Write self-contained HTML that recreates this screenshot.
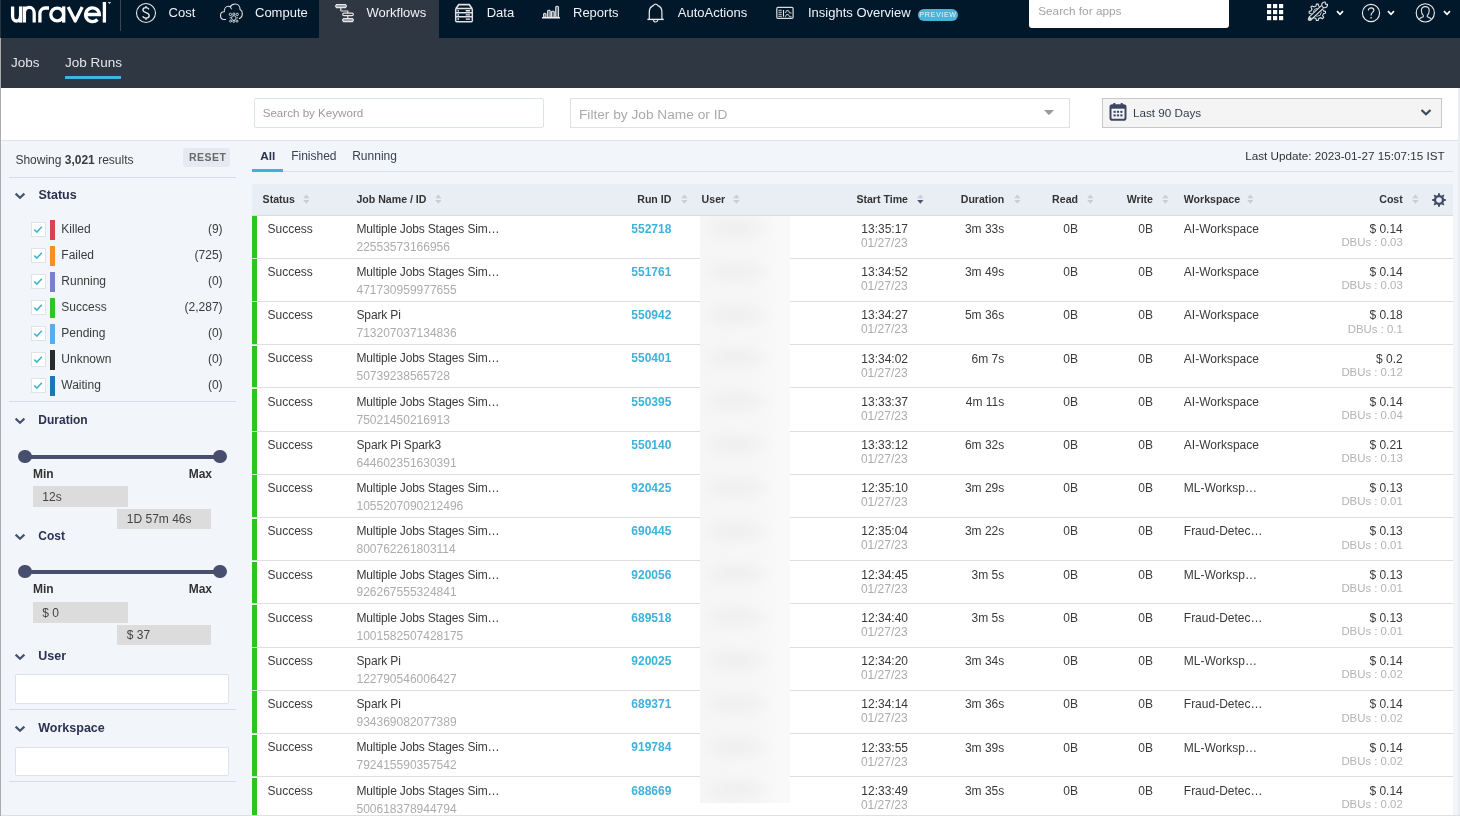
<!DOCTYPE html>
<html><head><meta charset="utf-8"><title>Job Runs</title>
<style>
html,body{margin:0;padding:0;width:1460px;height:816px;overflow:hidden;background:#f2f5f9;font-family:"Liberation Sans", sans-serif;}
.t{position:absolute;white-space:nowrap;font-family:"Liberation Sans", sans-serif;}
.r{position:absolute;display:block;}
b{font-weight:700}
</style></head><body>
<div id="root" style="position:absolute;left:0;top:0;width:1460px;height:816px;will-change:transform">
<div class="r" style="left:0px;top:0px;width:1460px;height:38px;background:#01182b"></div>
<div class="r" style="left:0px;top:38px;width:1460px;height:50px;background:#2e3742"></div>
<div class="r" style="left:0px;top:88px;width:1460px;height:52px;background:#fff"></div>
<div class="r" style="left:0px;top:140px;width:1460px;height:1px;background:#dfe3e8"></div>
<div class="r" style="left:0px;top:141px;width:1460px;height:675px;background:#f2f5f9"></div>
<div class="r" style="left:0px;top:815px;width:1460px;height:1px;background:#dde1e6"></div>
<div class="r" style="left:0px;top:38px;width:1px;height:778px;background:#a9abae"></div>
<div class="r" style="left:0px;top:0px;width:1px;height:38px;background:#2a3440"></div>
<div class="r" style="left:1458px;top:88px;width:2px;height:728px;background:#e9ecf0"></div>
<svg class="r" style="left:0px;top:0px" width="120" height="30" viewBox="0 0 120 30"><g fill="none" stroke="#fff" stroke-width="3.3" stroke-linecap="butt">
<path d="M12.6,6.4 V16.2 A3.9,4.8 0 0 0 20.4,16.2"/>
<path d="M20.6,6.4 V22.6"/>
<path d="M24.4,22.6 V6.4 M24.4,13 A4.9,5.6 0 0 1 34.2,13 V22.6"/>
<path d="M39.9,22.6 V13.5 A5.5,5.6 0 0 1 45.4,8 H49"/>
<circle cx="57.2" cy="14.5" r="6.4"/>
<path d="M63.7,6.4 V22.6"/>
<path d="M68.2,7.1 L75.2,21 L82.2,7.1" stroke-linejoin="round"/>
<path d="M85.5,14.5 H99.4 A6.9,6.9 0 1 0 97.5,19.5"/>
<path d="M104.4,2 V22.6"/>
</g>
<path d="M108,2.6 H111 M109.5,2.6 V4" stroke="#fff" stroke-width="0.7"/></svg>
<div class="r" style="left:120px;top:0px;width:1px;height:31px;background:#3b4553"></div>
<svg class="r" style="left:134px;top:1px" width="24" height="24" viewBox="0 0 24 24"><circle cx="12" cy="12" r="9.5" fill="none" stroke="#e8e8e8" stroke-width="1.1"/>
<path d="M15,8.3 C14.2,7.1 12.9,6.7 11.8,6.7 C10,6.7 8.9,7.7 8.9,9.1 C8.9,12.3 15.2,11.1 15.2,14.6 C15.2,16.1 13.9,17.2 12,17.2 C10.6,17.2 9.3,16.6 8.6,15.4 M12,5 V6.7 M12,17.2 V19" fill="none" stroke="#ececec" stroke-width="1.3"/></svg>
<div class="t" style="left:168.6px;top:6.20px;font-size:13px;line-height:13px;font-weight:400;color:#f0f2f5;">Cost</div>
<svg class="r" style="left:218px;top:1px" width="28" height="24" viewBox="0 0 28 24"><path d="M8,18.5 H5.8 C3.8,18.5 2.5,16.6 2.5,14.6 C2.5,12.4 4.1,10.8 6.2,10.8 C6.2,7.6 8,5.3 10.3,5.3 C11,5.3 11.7,5.5 12.2,5.9 C13.1,4.2 14.9,3 17.1,3 C20.1,3 22.1,5.3 22.1,8.4 C23.6,9.1 24.3,10.6 24.3,12.5 C24.3,15 22.9,17.2 20.9,17.6" fill="none" stroke="#e3e3e3" stroke-width="1.1"/>
<path d="M12.2,5.9 C13,6.5 13.4,7.3 13.4,8.3" fill="none" stroke="#e3e3e3" stroke-width="1"/>
<g fill="none" stroke="#e3e3e3" stroke-width="0.9"><circle cx="12.4" cy="13.4" r="1.2"/><circle cx="15.8" cy="13.1" r="1.1"/><circle cx="19.2" cy="13.4" r="1.2"/>
<circle cx="15.8" cy="17" r="2.3"/><path d="M11.6,16.8 H12.9 M18.7,16.8 H20"/>
<circle cx="12.6" cy="20.1" r="1"/><circle cx="15.8" cy="20.4" r="1"/><circle cx="19" cy="20.1" r="1"/></g></svg>
<div class="t" style="left:255px;top:6.20px;font-size:13px;line-height:13px;font-weight:400;color:#f0f2f5;">Compute</div>
<div class="r" style="left:319px;top:0px;width:120px;height:38px;background:#2e3742"></div>
<svg class="r" style="left:333px;top:2px" width="22" height="22" viewBox="0 0 22 22"><g fill="#9ea3ab" stroke="#e6e6e6" stroke-width="1.1">
<path d="M3.5,2.5 H12.5 L13.5,4 L12.5,5.6 H3.5 L2.5,4 Z"/>
<path d="M10.5,16.5 H19.5 L20.5,18 L19.5,19.6 H10.5 L9.5,18 Z"/></g>
<rect x="9.7" y="11.2" width="10.6" height="2.4" rx="1.2" fill="none" stroke="#e6e6e6" stroke-width="1.2"/>
<path d="M7.8,5.6 V8.2 Q7.8,9 8.6,9 H14.8 V11.2 M14.8,13.6 V16.5" fill="none" stroke="#e6e6e6" stroke-width="1.2"/></svg>
<div class="t" style="left:366.5px;top:6.20px;font-size:13px;line-height:13px;font-weight:400;color:#f0f2f5;">Workflows</div>
<svg class="r" style="left:453px;top:2px" width="22" height="22" viewBox="0 0 22 22"><g fill="none" stroke="#dfe1e4" stroke-width="1.5">
<path d="M3,6.6 L5.8,2.6 H16.2 L19,6.6" stroke-width="1.7"/>
<rect x="2.7" y="6.6" width="16.6" height="13.2" rx="1"/>
<path d="M2.7,10.7 H19.3 M2.7,14.8 H19.3"/>
</g>
<g fill="#f0f0f0"><rect x="12.6" y="8.1" width="4.6" height="1.3" rx="0.6"/><rect x="12.6" y="12.2" width="4.6" height="1.3" rx="0.6"/><rect x="12.6" y="16.4" width="4.6" height="1.3" rx="0.6"/>
<rect x="4.6" y="7.8" width="1.2" height="2" /><rect x="4.6" y="11.9" width="1.2" height="2"/><rect x="4.6" y="16" width="1.2" height="2.2"/></g></svg>
<div class="t" style="left:486.7px;top:6.20px;font-size:13px;line-height:13px;font-weight:400;color:#f0f2f5;">Data</div>
<svg class="r" style="left:540px;top:4px" width="22" height="16" viewBox="0 0 22 16"><g fill="#5d6670" stroke="#dcdfe2" stroke-width="1.1">
<rect x="3.6" y="9.3" width="2.4" height="4" rx="1"/>
<rect x="7.6" y="6.3" width="2.6" height="7" rx="0.9"/>
<rect x="11.5" y="7.3" width="2.8" height="6" rx="0.9"/>
<rect x="15.7" y="2.3" width="2.8" height="11" rx="1"/>
</g><rect x="2" y="12.9" width="18" height="1.5" rx="0.5" fill="#f0f0f0"/></svg>
<div class="t" style="left:573px;top:6.20px;font-size:13px;line-height:13px;font-weight:400;color:#f0f2f5;">Reports</div>
<svg class="r" style="left:645px;top:2px" width="22" height="22" viewBox="0 0 22 22"><path d="M4.3,17.2 V10 C4.3,6.8 6,4.6 8.2,3.7 C8.9,2.6 9.7,2.1 10.6,2.1 C11.5,2.1 12.3,2.6 13,3.7 C15.2,4.6 16.9,6.8 16.9,10 V17.2" fill="none" stroke="#e0e0e0" stroke-width="1.3"/>
<path d="M2.4,17.4 H18.8" stroke="#e8e8e8" stroke-width="1.4"/>
<path d="M8.4,17.8 A2.2,2.2 0 0 0 12.8,17.8" fill="none" stroke="#e0e0e0" stroke-width="1.2"/></svg>
<div class="t" style="left:677.8px;top:6.20px;font-size:13px;line-height:13px;font-weight:400;color:#f0f2f5;">AutoActions</div>
<svg class="r" style="left:774px;top:4px" width="22" height="18" viewBox="0 0 22 18"><rect x="2.8" y="3.45" width="16.3" height="10.9" rx="1.2" fill="none" stroke="#d9dcdf" stroke-width="1.2"/>
<g stroke="#e6e6e6" stroke-width="0.9"><path d="M4.4,6.3 H7.8 M4.4,8.3 H7.8 M4.4,10.3 H7.8 M4.4,12.3 H7.8"/><path d="M9.5,6 V12.7" stroke-width="1.1"/>
<path d="M11.4,9 L12.6,6.6 H14.4 L15.6,9 H17.6 M11.4,12.8 L12.4,10.6 H14.4 L15.6,12.8 H17.6" fill="none"/></g></svg>
<div class="t" style="left:808px;top:6.20px;font-size:13px;line-height:13px;font-weight:400;color:#f0f2f5;">Insights Overview</div>
<div class="r" style="left:918px;top:9px;width:40px;height:11.5px;background:#4bb3d9;border-radius:6px"></div>
<div class="t" style="left:738px;width:400px;text-align:center;top:11.41px;font-size:7.2px;line-height:7.2px;font-weight:400;color:#e6f5fb;letter-spacing:0.6px">PREVIEW</div>
<div class="r" style="left:1029px;top:0px;width:200px;height:28px;background:#fff;border-radius:0 0 3px 3px"></div>
<div class="t" style="left:1038.2px;top:5.91px;font-size:11.8px;line-height:11.8px;font-weight:400;color:#a3a3a3;">Search for apps</div>
<svg class="r" style="left:1267px;top:4px" width="16.5" height="16.5" viewBox="0 0 16.5 16.5"><g fill="#fff"><rect x="0" y="0" width="4.2" height="4.2"/><rect x="0" y="6" width="4.2" height="4.2"/><rect x="0" y="12" width="4.2" height="4.2"/><rect x="6" y="0" width="4.2" height="4.2"/><rect x="6" y="6" width="4.2" height="4.2"/><rect x="6" y="12" width="4.2" height="4.2"/><rect x="12" y="0" width="4.2" height="4.2"/><rect x="12" y="6" width="4.2" height="4.2"/><rect x="12" y="12" width="4.2" height="4.2"/></g></svg>
<svg class="r" style="left:1304px;top:0px" width="28" height="24" viewBox="0 0 28 24"><path d="M19.43,10.86 L21.45,11.40 L21.45,13.20 L19.43,13.74 L18.65,15.62 L19.70,17.43 L18.43,18.70 L16.62,17.65 L14.74,18.43 L14.20,20.45 L12.40,20.45 L11.86,18.43 L9.98,17.65 L8.17,18.70 L6.90,17.43 L7.95,15.62 L7.17,13.74 L5.15,13.20 L5.15,11.40 L7.17,10.86 L7.95,8.98 L6.90,7.17 L8.17,5.90 L9.98,6.95 L11.86,6.17 L12.40,4.15 L14.20,4.15 L14.74,6.17 L16.62,6.95 L18.43,5.90 L19.70,7.17 L18.65,8.98 Z" fill="none" stroke="#e0e0e0" stroke-width="1.1"/>
<circle cx="13.3" cy="12.3" r="3.9" fill="none" stroke="#d8d8d8" stroke-width="0.9"/>
<path d="M5.6,18.8 L19.6,5.8" stroke="#01182b" stroke-width="4.4"/>
<path d="M6.7,20 L20.6,7.1 M4.5,17.6 L18.4,4.7" stroke="#e3e3e3" stroke-width="1.05"/>
<circle cx="20.6" cy="4.9" r="3.6" fill="#01182b"/>
<path d="M23.46,4.4 A2.9,2.9 0 1 1 21.1,2.04 L21.6,4.2 Z" fill="none" stroke="#e3e3e3" stroke-width="1.15" stroke-linejoin="round"/>
<circle cx="5.8" cy="19" r="2.1" fill="#d0d0d0"/></svg>
<svg class="r" style="left:1335.5px;top:10px" width="8" height="6" viewBox="0 0 8 6"><path d="M1,1.2 L4,4.3 L7,1.2" fill="none" stroke="#fff" stroke-width="1.7"/></svg>
<svg class="r" style="left:1360px;top:2px" width="22" height="22" viewBox="0 0 22 22"><circle cx="11" cy="11" r="8.6" fill="none" stroke="#eaeaea" stroke-width="1.15"/>
<path d="M8.3,8.6 C8.3,6.9 9.5,5.8 11.1,5.8 C12.7,5.8 13.9,6.9 13.9,8.3 C13.9,10.4 11.1,10.4 11.1,12.9 V13.6" fill="none" stroke="#eaeaea" stroke-width="1.15"/>
<rect x="10.4" y="15.1" width="1.4" height="1.3" fill="#eaeaea"/></svg>
<svg class="r" style="left:1387px;top:10px" width="8" height="6" viewBox="0 0 8 6"><path d="M1,1.2 L4,4.3 L7,1.2" fill="none" stroke="#fff" stroke-width="1.7"/></svg>
<svg class="r" style="left:1414px;top:1px" width="23" height="23" viewBox="0 0 23 23"><circle cx="11.3" cy="11.9" r="9.1" fill="none" stroke="#eaeaea" stroke-width="1.15"/>
<path d="M4.9,18.5 C6,16.8 7.8,16.2 9.3,15.7 V14.4 C8,13.4 7.4,11.5 7.4,9.6 C7.4,7.1 9,5.6 11.3,5.6 C13.6,5.6 15.2,7.1 15.2,9.6 C15.2,11.5 14.6,13.4 13.3,14.4 V15.7 C14.8,16.2 16.6,16.8 17.7,18.5" fill="none" stroke="#e0e0e0" stroke-width="1.1"/></svg>
<svg class="r" style="left:1443px;top:10px" width="8" height="6" viewBox="0 0 8 6"><path d="M1,1.2 L4,4.3 L7,1.2" fill="none" stroke="#fff" stroke-width="1.7"/></svg>
<div class="t" style="left:11px;top:55.57px;font-size:13.5px;line-height:13.5px;font-weight:400;color:#e3e6ea;">Jobs</div>
<div class="t" style="left:65px;top:55.57px;font-size:13.5px;line-height:13.5px;font-weight:400;color:#e3e6ea;">Job Runs</div>
<div class="r" style="left:65px;top:76px;width:56px;height:2.5px;background:#3db5df"></div>
<div class="r" style="left:254px;top:98px;width:290px;height:30px;border:1px solid #dde3ea;border-radius:2px;box-sizing:border-box;background:#fff"></div>
<div class="t" style="left:262.7px;top:107.38px;font-size:11.6px;line-height:11.6px;font-weight:400;color:#9a9a9a;">Search by Keyword</div>
<div class="r" style="left:570px;top:98px;width:500px;height:30px;border:1px solid #e1e1e1;box-sizing:border-box;background:#fff"></div>
<div class="t" style="left:579px;top:107.70px;font-size:13.7px;line-height:13.7px;font-weight:400;color:#aaaaaa;">Filter by Job Name or ID</div>
<svg class="r" style="left:1044px;top:109.5px" width="10" height="5.5" viewBox="0 0 10 5.5"><path d="M0,0 H10 L5,5.2 Z" fill="#9b9b9b"/></svg>
<div class="r" style="left:1102px;top:98px;width:340px;height:30px;border:1px solid #c8c8c8;box-sizing:border-box;background:#f4f4f4"></div>
<svg class="r" style="left:1109px;top:102px" width="18" height="19" viewBox="0 0 18 19"><rect x="1.5" y="3.2" width="15" height="14.5" rx="1.8" fill="none" stroke="#3b4661" stroke-width="2"/>
<rect x="1.5" y="3.2" width="15" height="3.5" fill="#3b4661"/>
<rect x="4.3" y="1" width="2" height="3.5" fill="#3b4661"/><rect x="11.7" y="1" width="2" height="3.5" fill="#3b4661"/>
<g fill="#3b4661"><rect x="4.5" y="8.8" width="2.2" height="2"/><rect x="7.9" y="8.8" width="2.2" height="2"/><rect x="11.3" y="8.8" width="2.2" height="2"/>
<rect x="4.5" y="12.4" width="2.2" height="2"/><rect x="7.9" y="12.4" width="2.2" height="2"/><rect x="11.3" y="12.4" width="2.2" height="2"/></g></svg>
<div class="t" style="left:1133px;top:106.60px;font-size:11.7px;line-height:11.7px;font-weight:400;color:#353c52;">Last 90 Days</div>
<svg class="r" style="left:1420px;top:108px" width="12" height="9" viewBox="0 0 12 9"><path d="M1.5,2 L6,6.3 L10.5,2" fill="none" stroke="#3b4661" stroke-width="2.2"/></svg>
<div class="t" style="left:15.4px;top:153.84px;font-size:12px;line-height:12px;font-weight:400;color:#3c3c3c;">Showing <b>3,021</b> results</div>
<div class="r" style="left:183px;top:148.3px;width:46.5px;height:19.2px;background:#e6e9ef;border-radius:3px"></div>
<div class="t" style="left:189px;top:152.31px;font-size:10.5px;line-height:10.5px;font-weight:700;color:#6a6a6a;letter-spacing:0.45px">RESET</div>
<div class="r" style="left:9px;top:177px;width:227px;height:1px;background:#d8dce2"></div>
<svg class="r" style="left:14px;top:192px" width="12" height="8" viewBox="0 0 12 8"><path d="M1.6,1.6 L6,5.8 L10.4,1.6" fill="none" stroke="#4a5472" stroke-width="2.2"/></svg>
<div class="t" style="left:38.5px;top:189.02px;font-size:12.5px;line-height:12.5px;font-weight:700;color:#2b3252;">Status</div>
<div class="r" style="left:30.5px;top:221.5px;width:15px;height:15px;background:#fff;border:1px solid #dfe2e6;box-sizing:border-box"></div>
<svg class="r" style="left:33px;top:224.5px" width="10" height="9" viewBox="0 0 10 9"><path d="M1.3,4.6 L3.9,7.1 L8.8,1.8" fill="none" stroke="#3eb3dc" stroke-width="1.6"/></svg>
<div class="r" style="left:50px;top:220px;width:5px;height:20px;background:#d9434f"></div>
<div class="t" style="left:61.3px;top:223.04px;font-size:12px;line-height:12px;font-weight:400;color:#3b3b3b;">Killed</div>
<div class="t" style="left:-177.4px;width:400px;text-align:right;top:223.04px;font-size:12px;line-height:12px;font-weight:400;color:#3b3b3b;">(9)</div>
<div class="r" style="left:30.5px;top:247.5px;width:15px;height:15px;background:#fff;border:1px solid #dfe2e6;box-sizing:border-box"></div>
<svg class="r" style="left:33px;top:250.5px" width="10" height="9" viewBox="0 0 10 9"><path d="M1.3,4.6 L3.9,7.1 L8.8,1.8" fill="none" stroke="#3eb3dc" stroke-width="1.6"/></svg>
<div class="r" style="left:50px;top:246px;width:5px;height:20px;background:#f7901e"></div>
<div class="t" style="left:61.3px;top:249.04px;font-size:12px;line-height:12px;font-weight:400;color:#3b3b3b;">Failed</div>
<div class="t" style="left:-177.4px;width:400px;text-align:right;top:249.04px;font-size:12px;line-height:12px;font-weight:400;color:#3b3b3b;">(725)</div>
<div class="r" style="left:30.5px;top:273.5px;width:15px;height:15px;background:#fff;border:1px solid #dfe2e6;box-sizing:border-box"></div>
<svg class="r" style="left:33px;top:276.5px" width="10" height="9" viewBox="0 0 10 9"><path d="M1.3,4.6 L3.9,7.1 L8.8,1.8" fill="none" stroke="#3eb3dc" stroke-width="1.6"/></svg>
<div class="r" style="left:50px;top:272px;width:5px;height:20px;background:#7b7fcc"></div>
<div class="t" style="left:61.3px;top:275.04px;font-size:12px;line-height:12px;font-weight:400;color:#3b3b3b;">Running</div>
<div class="t" style="left:-177.4px;width:400px;text-align:right;top:275.04px;font-size:12px;line-height:12px;font-weight:400;color:#3b3b3b;">(0)</div>
<div class="r" style="left:30.5px;top:299.5px;width:15px;height:15px;background:#fff;border:1px solid #dfe2e6;box-sizing:border-box"></div>
<svg class="r" style="left:33px;top:302.5px" width="10" height="9" viewBox="0 0 10 9"><path d="M1.3,4.6 L3.9,7.1 L8.8,1.8" fill="none" stroke="#3eb3dc" stroke-width="1.6"/></svg>
<div class="r" style="left:50px;top:298px;width:5px;height:20px;background:#2ec42a"></div>
<div class="t" style="left:61.3px;top:301.04px;font-size:12px;line-height:12px;font-weight:400;color:#3b3b3b;">Success</div>
<div class="t" style="left:-177.4px;width:400px;text-align:right;top:301.04px;font-size:12px;line-height:12px;font-weight:400;color:#3b3b3b;">(2,287)</div>
<div class="r" style="left:30.5px;top:325.5px;width:15px;height:15px;background:#fff;border:1px solid #dfe2e6;box-sizing:border-box"></div>
<svg class="r" style="left:33px;top:328.5px" width="10" height="9" viewBox="0 0 10 9"><path d="M1.3,4.6 L3.9,7.1 L8.8,1.8" fill="none" stroke="#3eb3dc" stroke-width="1.6"/></svg>
<div class="r" style="left:50px;top:324px;width:5px;height:20px;background:#5badea"></div>
<div class="t" style="left:61.3px;top:327.04px;font-size:12px;line-height:12px;font-weight:400;color:#3b3b3b;">Pending</div>
<div class="t" style="left:-177.4px;width:400px;text-align:right;top:327.04px;font-size:12px;line-height:12px;font-weight:400;color:#3b3b3b;">(0)</div>
<div class="r" style="left:30.5px;top:351.5px;width:15px;height:15px;background:#fff;border:1px solid #dfe2e6;box-sizing:border-box"></div>
<svg class="r" style="left:33px;top:354.5px" width="10" height="9" viewBox="0 0 10 9"><path d="M1.3,4.6 L3.9,7.1 L8.8,1.8" fill="none" stroke="#3eb3dc" stroke-width="1.6"/></svg>
<div class="r" style="left:50px;top:350px;width:5px;height:20px;background:#2b2b2b"></div>
<div class="t" style="left:61.3px;top:353.04px;font-size:12px;line-height:12px;font-weight:400;color:#3b3b3b;">Unknown</div>
<div class="t" style="left:-177.4px;width:400px;text-align:right;top:353.04px;font-size:12px;line-height:12px;font-weight:400;color:#3b3b3b;">(0)</div>
<div class="r" style="left:30.5px;top:377.5px;width:15px;height:15px;background:#fff;border:1px solid #dfe2e6;box-sizing:border-box"></div>
<svg class="r" style="left:33px;top:380.5px" width="10" height="9" viewBox="0 0 10 9"><path d="M1.3,4.6 L3.9,7.1 L8.8,1.8" fill="none" stroke="#3eb3dc" stroke-width="1.6"/></svg>
<div class="r" style="left:50px;top:376px;width:5px;height:20px;background:#1c77b3"></div>
<div class="t" style="left:61.3px;top:379.04px;font-size:12px;line-height:12px;font-weight:400;color:#3b3b3b;">Waiting</div>
<div class="t" style="left:-177.4px;width:400px;text-align:right;top:379.04px;font-size:12px;line-height:12px;font-weight:400;color:#3b3b3b;">(0)</div>
<div class="r" style="left:9px;top:401px;width:227px;height:1px;background:#d8dce2"></div>
<svg class="r" style="left:14px;top:416.5px" width="12" height="8" viewBox="0 0 12 8"><path d="M1.6,1.6 L6,5.8 L10.4,1.6" fill="none" stroke="#4a5472" stroke-width="2.2"/></svg>
<div class="t" style="left:38.3px;top:414.34px;font-size:12px;line-height:12px;font-weight:700;color:#2b3252;">Duration</div>
<div class="r" style="left:25px;top:454.7px;width:195px;height:4px;background:#474e6e"></div>
<div class="r" style="left:18.2px;top:449.9px;width:13.6px;height:13.6px;background:#474e6e;border-radius:50%"></div>
<div class="r" style="left:213.2px;top:449.9px;width:13.6px;height:13.6px;background:#474e6e;border-radius:50%"></div>
<div class="t" style="left:33px;top:467.84px;font-size:12px;line-height:12px;font-weight:700;color:#333;">Min</div>
<div class="t" style="left:-188px;width:400px;text-align:right;top:467.84px;font-size:12px;line-height:12px;font-weight:700;color:#333;">Max</div>
<div class="r" style="left:33px;top:486.4px;width:95px;height:20.8px;background:#dcdcdc"></div>
<div class="t" style="left:42.3px;top:491.14px;font-size:12px;line-height:12px;font-weight:400;color:#444;">12s</div>
<div class="r" style="left:117.3px;top:508.8px;width:94.2px;height:20.5px;background:#dcdcdc"></div>
<div class="t" style="left:126.8px;top:513.44px;font-size:12px;line-height:12px;font-weight:400;color:#444;">1D 57m 46s</div>
<svg class="r" style="left:14px;top:532.5px" width="12" height="8" viewBox="0 0 12 8"><path d="M1.6,1.6 L6,5.8 L10.4,1.6" fill="none" stroke="#4a5472" stroke-width="2.2"/></svg>
<div class="t" style="left:38.3px;top:530.14px;font-size:12px;line-height:12px;font-weight:700;color:#2b3252;">Cost</div>
<div class="r" style="left:25px;top:569.6px;width:195px;height:4px;background:#474e6e"></div>
<div class="r" style="left:18.2px;top:564.8000000000001px;width:13.6px;height:13.6px;background:#474e6e;border-radius:50%"></div>
<div class="r" style="left:213.2px;top:564.8000000000001px;width:13.6px;height:13.6px;background:#474e6e;border-radius:50%"></div>
<div class="t" style="left:33px;top:583.44px;font-size:12px;line-height:12px;font-weight:700;color:#333;">Min</div>
<div class="t" style="left:-188px;width:400px;text-align:right;top:583.44px;font-size:12px;line-height:12px;font-weight:700;color:#333;">Max</div>
<div class="r" style="left:33px;top:602.2px;width:95px;height:20.8px;background:#dcdcdc"></div>
<div class="t" style="left:42.3px;top:606.84px;font-size:12px;line-height:12px;font-weight:400;color:#444;">$ 0</div>
<div class="r" style="left:117.3px;top:624.6px;width:94.2px;height:20.5px;background:#dcdcdc"></div>
<div class="t" style="left:126.8px;top:629.24px;font-size:12px;line-height:12px;font-weight:400;color:#444;">$ 37</div>
<svg class="r" style="left:14px;top:652.5px" width="12" height="8" viewBox="0 0 12 8"><path d="M1.6,1.6 L6,5.8 L10.4,1.6" fill="none" stroke="#4a5472" stroke-width="2.2"/></svg>
<div class="t" style="left:38.3px;top:649.72px;font-size:12.5px;line-height:12.5px;font-weight:700;color:#2b3252;">User</div>
<div class="r" style="left:15.3px;top:674.4px;width:214.2px;height:29.2px;background:#fff;border:1px solid #dde2ea;border-radius:2px;box-sizing:border-box"></div>
<div class="r" style="left:9px;top:709px;width:227px;height:1px;background:#d8dce2"></div>
<svg class="r" style="left:14px;top:724.5px" width="12" height="8" viewBox="0 0 12 8"><path d="M1.6,1.6 L6,5.8 L10.4,1.6" fill="none" stroke="#4a5472" stroke-width="2.2"/></svg>
<div class="t" style="left:38.3px;top:721.92px;font-size:12.5px;line-height:12.5px;font-weight:700;color:#2b3252;">Workspace</div>
<div class="r" style="left:15.3px;top:746.5px;width:214.2px;height:29px;background:#fff;border:1px solid #dde2ea;border-radius:2px;box-sizing:border-box"></div>
<div class="r" style="left:9px;top:781px;width:227px;height:1px;background:#d8dce2"></div>
<div class="t" style="left:260.3px;top:150.81px;font-size:11.8px;line-height:11.8px;font-weight:700;color:#2b3350;">All</div>
<div class="t" style="left:291.2px;top:150.04px;font-size:12px;line-height:12px;font-weight:400;color:#3b4257;">Finished</div>
<div class="t" style="left:352.2px;top:150.04px;font-size:12px;line-height:12px;font-weight:400;color:#3b4257;">Running</div>
<div class="r" style="left:252px;top:170.5px;width:1201px;height:1.2px;background:#dcdfe4"></div>
<div class="r" style="left:252px;top:169px;width:31px;height:3px;background:#3eb3d9"></div>
<div class="t" style="left:1044.7px;width:400px;text-align:right;top:150.10px;font-size:11.7px;line-height:11.7px;font-weight:400;color:#333;">Last Update: 2023-01-27 15:07:15 IST</div>
<div class="r" style="left:252px;top:184px;width:1201px;height:31px;background:#e9edf4"></div>
<div class="r" style="left:252px;top:214.5px;width:1201px;height:1px;background:#d9dde3"></div>
<div class="t" style="left:262.6px;top:193.73px;font-size:10.6px;line-height:10.6px;font-weight:700;color:#333;">Status</div>
<svg class="r" style="left:302.6px;top:194px" width="7" height="11" viewBox="0 0 7 11"><path d="M0.2,4.2 L3.35,0.6 L6.5,4.2 Z" fill="#c9cdd5"/><path d="M0.2,6 L6.5,6 L3.35,9.7 Z" fill="#c9cdd5"/></svg>
<div class="t" style="left:356.4px;top:193.73px;font-size:10.6px;line-height:10.6px;font-weight:700;color:#333;">Job Name / ID</div>
<svg class="r" style="left:434.8px;top:194px" width="7" height="11" viewBox="0 0 7 11"><path d="M0.2,4.2 L3.35,0.6 L6.5,4.2 Z" fill="#c9cdd5"/><path d="M0.2,6 L6.5,6 L3.35,9.7 Z" fill="#c9cdd5"/></svg>
<div class="t" style="left:271.4px;width:400px;text-align:right;top:193.73px;font-size:10.6px;line-height:10.6px;font-weight:700;color:#333;">Run ID</div>
<svg class="r" style="left:680.8px;top:194px" width="7" height="11" viewBox="0 0 7 11"><path d="M0.2,4.2 L3.35,0.6 L6.5,4.2 Z" fill="#c9cdd5"/><path d="M0.2,6 L6.5,6 L3.35,9.7 Z" fill="#c9cdd5"/></svg>
<div class="t" style="left:701.6px;top:193.73px;font-size:10.6px;line-height:10.6px;font-weight:700;color:#333;">User</div>
<svg class="r" style="left:732.6px;top:194px" width="7" height="11" viewBox="0 0 7 11"><path d="M0.2,4.2 L3.35,0.6 L6.5,4.2 Z" fill="#c9cdd5"/><path d="M0.2,6 L6.5,6 L3.35,9.7 Z" fill="#c9cdd5"/></svg>
<div class="t" style="left:508px;width:400px;text-align:right;top:193.73px;font-size:10.6px;line-height:10.6px;font-weight:700;color:#333;">Start Time</div>
<svg class="r" style="left:917px;top:194px" width="7" height="11" viewBox="0 0 7 11"><path d="M0.2,4.2 L3.35,0.6 L6.5,4.2 Z" fill="#c9cdd5"/><path d="M0.2,6 L6.5,6 L3.35,9.7 Z" fill="#4a5473"/></svg>
<div class="t" style="left:604.3px;width:400px;text-align:right;top:193.73px;font-size:10.6px;line-height:10.6px;font-weight:700;color:#333;">Duration</div>
<svg class="r" style="left:1013.6px;top:194px" width="7" height="11" viewBox="0 0 7 11"><path d="M0.2,4.2 L3.35,0.6 L6.5,4.2 Z" fill="#c9cdd5"/><path d="M0.2,6 L6.5,6 L3.35,9.7 Z" fill="#c9cdd5"/></svg>
<div class="t" style="left:678px;width:400px;text-align:right;top:193.73px;font-size:10.6px;line-height:10.6px;font-weight:700;color:#333;">Read</div>
<svg class="r" style="left:1086.6px;top:194px" width="7" height="11" viewBox="0 0 7 11"><path d="M0.2,4.2 L3.35,0.6 L6.5,4.2 Z" fill="#c9cdd5"/><path d="M0.2,6 L6.5,6 L3.35,9.7 Z" fill="#c9cdd5"/></svg>
<div class="t" style="left:753px;width:400px;text-align:right;top:193.73px;font-size:10.6px;line-height:10.6px;font-weight:700;color:#333;">Write</div>
<svg class="r" style="left:1161.6px;top:194px" width="7" height="11" viewBox="0 0 7 11"><path d="M0.2,4.2 L3.35,0.6 L6.5,4.2 Z" fill="#c9cdd5"/><path d="M0.2,6 L6.5,6 L3.35,9.7 Z" fill="#c9cdd5"/></svg>
<div class="t" style="left:1183.8px;top:193.73px;font-size:10.6px;line-height:10.6px;font-weight:700;color:#333;">Workspace</div>
<svg class="r" style="left:1246.6px;top:194px" width="7" height="11" viewBox="0 0 7 11"><path d="M0.2,4.2 L3.35,0.6 L6.5,4.2 Z" fill="#c9cdd5"/><path d="M0.2,6 L6.5,6 L3.35,9.7 Z" fill="#c9cdd5"/></svg>
<div class="t" style="left:1002.8px;width:400px;text-align:right;top:193.73px;font-size:10.6px;line-height:10.6px;font-weight:700;color:#333;">Cost</div>
<svg class="r" style="left:1411.8px;top:194px" width="7" height="11" viewBox="0 0 7 11"><path d="M0.2,4.2 L3.35,0.6 L6.5,4.2 Z" fill="#c9cdd5"/><path d="M0.2,6 L6.5,6 L3.35,9.7 Z" fill="#c9cdd5"/></svg>
<svg class="r" style="left:1432px;top:193px" width="14" height="14" viewBox="0 0 14 14"><path d="M12.10,5.99 L13.97,6.35 L13.97,7.65 L12.10,8.01 L11.32,9.89 L12.39,11.47 L11.47,12.39 L9.89,11.32 L8.01,12.10 L7.65,13.97 L6.35,13.97 L5.99,12.10 L4.11,11.32 L2.53,12.39 L1.61,11.47 L2.68,9.89 L1.90,8.01 L0.03,7.65 L0.03,6.35 L1.90,5.99 L2.68,4.11 L1.61,2.53 L2.53,1.61 L4.11,2.68 L5.99,1.90 L6.35,0.03 L7.65,0.03 L8.01,1.90 L9.89,2.68 L11.47,1.61 L12.39,2.53 L11.32,4.11 Z" fill="#404a68"/><circle cx="7" cy="7" r="2.8" fill="#e9edf4"/></svg>
<div class="r" style="left:252px;top:215.5px;width:1201px;height:599.5px;background:#fff"></div>
<div class="r" style="left:252px;top:216.0px;width:5px;height:42.22px;background:#2cc41e"></div>
<div class="r" style="left:252px;top:257.72px;width:448px;height:1px;background:#dedede"></div>
<div class="r" style="left:790px;top:257.72px;width:663px;height:1px;background:#dedede"></div>
<div class="t" style="left:267.5px;top:222.74px;font-size:12px;line-height:12px;font-weight:400;color:#3a3a3a;">Success</div>
<div class="t" style="left:356.5px;top:222.74px;font-size:12px;line-height:12px;font-weight:400;color:#3a3a3a;letter-spacing:-0.15px">Multiple Jobs Stages Sim…</div>
<div class="t" style="left:356.5px;top:240.64px;font-size:12px;line-height:12px;font-weight:400;color:#acacac;">22553573166956</div>
<div class="t" style="left:271.4px;width:400px;text-align:right;top:222.74px;font-size:12px;line-height:12px;font-weight:700;color:#3fb2da;">552718</div>
<div class="t" style="left:508px;width:400px;text-align:right;top:222.94px;font-size:12px;line-height:12px;font-weight:400;color:#3a3a3a;">13:35:17</div>
<div class="t" style="left:507.6px;width:400px;text-align:right;top:236.94px;font-size:12px;line-height:12px;font-weight:400;color:#acacac;">01/27/23</div>
<div class="t" style="left:604.3px;width:400px;text-align:right;top:222.94px;font-size:12px;line-height:12px;font-weight:400;color:#3a3a3a;">3m 33s</div>
<div class="t" style="left:678px;width:400px;text-align:right;top:222.94px;font-size:12px;line-height:12px;font-weight:400;color:#3a3a3a;">0B</div>
<div class="t" style="left:753px;width:400px;text-align:right;top:222.94px;font-size:12px;line-height:12px;font-weight:400;color:#3a3a3a;">0B</div>
<div class="t" style="left:1183.8px;top:222.94px;font-size:12px;line-height:12px;font-weight:400;color:#3a3a3a;">AI-Workspace</div>
<div class="t" style="left:1002.8px;width:400px;text-align:right;top:222.94px;font-size:12px;line-height:12px;font-weight:400;color:#3a3a3a;">$ 0.14</div>
<div class="t" style="left:1002.8px;width:400px;text-align:right;top:237.15px;font-size:11.4px;line-height:11.4px;font-weight:400;color:#b3b3b3;">DBUs : 0.03</div>
<div class="r" style="left:252px;top:259.22px;width:5px;height:42.22px;background:#2cc41e"></div>
<div class="r" style="left:252px;top:300.94px;width:448px;height:1px;background:#dedede"></div>
<div class="r" style="left:790px;top:300.94px;width:663px;height:1px;background:#dedede"></div>
<div class="t" style="left:267.5px;top:265.96px;font-size:12px;line-height:12px;font-weight:400;color:#3a3a3a;">Success</div>
<div class="t" style="left:356.5px;top:265.96px;font-size:12px;line-height:12px;font-weight:400;color:#3a3a3a;letter-spacing:-0.15px">Multiple Jobs Stages Sim…</div>
<div class="t" style="left:356.5px;top:283.86px;font-size:12px;line-height:12px;font-weight:400;color:#acacac;">471730959977655</div>
<div class="t" style="left:271.4px;width:400px;text-align:right;top:265.96px;font-size:12px;line-height:12px;font-weight:700;color:#3fb2da;">551761</div>
<div class="t" style="left:508px;width:400px;text-align:right;top:266.16px;font-size:12px;line-height:12px;font-weight:400;color:#3a3a3a;">13:34:52</div>
<div class="t" style="left:507.6px;width:400px;text-align:right;top:280.16px;font-size:12px;line-height:12px;font-weight:400;color:#acacac;">01/27/23</div>
<div class="t" style="left:604.3px;width:400px;text-align:right;top:266.16px;font-size:12px;line-height:12px;font-weight:400;color:#3a3a3a;">3m 49s</div>
<div class="t" style="left:678px;width:400px;text-align:right;top:266.16px;font-size:12px;line-height:12px;font-weight:400;color:#3a3a3a;">0B</div>
<div class="t" style="left:753px;width:400px;text-align:right;top:266.16px;font-size:12px;line-height:12px;font-weight:400;color:#3a3a3a;">0B</div>
<div class="t" style="left:1183.8px;top:266.16px;font-size:12px;line-height:12px;font-weight:400;color:#3a3a3a;">AI-Workspace</div>
<div class="t" style="left:1002.8px;width:400px;text-align:right;top:266.16px;font-size:12px;line-height:12px;font-weight:400;color:#3a3a3a;">$ 0.14</div>
<div class="t" style="left:1002.8px;width:400px;text-align:right;top:280.37px;font-size:11.4px;line-height:11.4px;font-weight:400;color:#b3b3b3;">DBUs : 0.03</div>
<div class="r" style="left:252px;top:302.44px;width:5px;height:42.22px;background:#2cc41e"></div>
<div class="r" style="left:252px;top:344.16px;width:448px;height:1px;background:#dedede"></div>
<div class="r" style="left:790px;top:344.16px;width:663px;height:1px;background:#dedede"></div>
<div class="t" style="left:267.5px;top:309.18px;font-size:12px;line-height:12px;font-weight:400;color:#3a3a3a;">Success</div>
<div class="t" style="left:356.5px;top:309.18px;font-size:12px;line-height:12px;font-weight:400;color:#3a3a3a;letter-spacing:-0.15px">Spark Pi</div>
<div class="t" style="left:356.5px;top:327.08px;font-size:12px;line-height:12px;font-weight:400;color:#acacac;">713207037134836</div>
<div class="t" style="left:271.4px;width:400px;text-align:right;top:309.18px;font-size:12px;line-height:12px;font-weight:700;color:#3fb2da;">550942</div>
<div class="t" style="left:508px;width:400px;text-align:right;top:309.38px;font-size:12px;line-height:12px;font-weight:400;color:#3a3a3a;">13:34:27</div>
<div class="t" style="left:507.6px;width:400px;text-align:right;top:323.38px;font-size:12px;line-height:12px;font-weight:400;color:#acacac;">01/27/23</div>
<div class="t" style="left:604.3px;width:400px;text-align:right;top:309.38px;font-size:12px;line-height:12px;font-weight:400;color:#3a3a3a;">5m 36s</div>
<div class="t" style="left:678px;width:400px;text-align:right;top:309.38px;font-size:12px;line-height:12px;font-weight:400;color:#3a3a3a;">0B</div>
<div class="t" style="left:753px;width:400px;text-align:right;top:309.38px;font-size:12px;line-height:12px;font-weight:400;color:#3a3a3a;">0B</div>
<div class="t" style="left:1183.8px;top:309.38px;font-size:12px;line-height:12px;font-weight:400;color:#3a3a3a;">AI-Workspace</div>
<div class="t" style="left:1002.8px;width:400px;text-align:right;top:309.38px;font-size:12px;line-height:12px;font-weight:400;color:#3a3a3a;">$ 0.18</div>
<div class="t" style="left:1002.8px;width:400px;text-align:right;top:323.59px;font-size:11.4px;line-height:11.4px;font-weight:400;color:#b3b3b3;">DBUs : 0.1</div>
<div class="r" style="left:252px;top:345.66px;width:5px;height:42.22px;background:#2cc41e"></div>
<div class="r" style="left:252px;top:387.38px;width:448px;height:1px;background:#dedede"></div>
<div class="r" style="left:790px;top:387.38px;width:663px;height:1px;background:#dedede"></div>
<div class="t" style="left:267.5px;top:352.40px;font-size:12px;line-height:12px;font-weight:400;color:#3a3a3a;">Success</div>
<div class="t" style="left:356.5px;top:352.40px;font-size:12px;line-height:12px;font-weight:400;color:#3a3a3a;letter-spacing:-0.15px">Multiple Jobs Stages Sim…</div>
<div class="t" style="left:356.5px;top:370.30px;font-size:12px;line-height:12px;font-weight:400;color:#acacac;">50739238565728</div>
<div class="t" style="left:271.4px;width:400px;text-align:right;top:352.40px;font-size:12px;line-height:12px;font-weight:700;color:#3fb2da;">550401</div>
<div class="t" style="left:508px;width:400px;text-align:right;top:352.60px;font-size:12px;line-height:12px;font-weight:400;color:#3a3a3a;">13:34:02</div>
<div class="t" style="left:507.6px;width:400px;text-align:right;top:366.60px;font-size:12px;line-height:12px;font-weight:400;color:#acacac;">01/27/23</div>
<div class="t" style="left:604.3px;width:400px;text-align:right;top:352.60px;font-size:12px;line-height:12px;font-weight:400;color:#3a3a3a;">6m 7s</div>
<div class="t" style="left:678px;width:400px;text-align:right;top:352.60px;font-size:12px;line-height:12px;font-weight:400;color:#3a3a3a;">0B</div>
<div class="t" style="left:753px;width:400px;text-align:right;top:352.60px;font-size:12px;line-height:12px;font-weight:400;color:#3a3a3a;">0B</div>
<div class="t" style="left:1183.8px;top:352.60px;font-size:12px;line-height:12px;font-weight:400;color:#3a3a3a;">AI-Workspace</div>
<div class="t" style="left:1002.8px;width:400px;text-align:right;top:352.60px;font-size:12px;line-height:12px;font-weight:400;color:#3a3a3a;">$ 0.2</div>
<div class="t" style="left:1002.8px;width:400px;text-align:right;top:366.81px;font-size:11.4px;line-height:11.4px;font-weight:400;color:#b3b3b3;">DBUs : 0.12</div>
<div class="r" style="left:252px;top:388.88px;width:5px;height:42.22px;background:#2cc41e"></div>
<div class="r" style="left:252px;top:430.6px;width:448px;height:1px;background:#dedede"></div>
<div class="r" style="left:790px;top:430.6px;width:663px;height:1px;background:#dedede"></div>
<div class="t" style="left:267.5px;top:395.62px;font-size:12px;line-height:12px;font-weight:400;color:#3a3a3a;">Success</div>
<div class="t" style="left:356.5px;top:395.62px;font-size:12px;line-height:12px;font-weight:400;color:#3a3a3a;letter-spacing:-0.15px">Multiple Jobs Stages Sim…</div>
<div class="t" style="left:356.5px;top:413.52px;font-size:12px;line-height:12px;font-weight:400;color:#acacac;">75021450216913</div>
<div class="t" style="left:271.4px;width:400px;text-align:right;top:395.62px;font-size:12px;line-height:12px;font-weight:700;color:#3fb2da;">550395</div>
<div class="t" style="left:508px;width:400px;text-align:right;top:395.82px;font-size:12px;line-height:12px;font-weight:400;color:#3a3a3a;">13:33:37</div>
<div class="t" style="left:507.6px;width:400px;text-align:right;top:409.82px;font-size:12px;line-height:12px;font-weight:400;color:#acacac;">01/27/23</div>
<div class="t" style="left:604.3px;width:400px;text-align:right;top:395.82px;font-size:12px;line-height:12px;font-weight:400;color:#3a3a3a;">4m 11s</div>
<div class="t" style="left:678px;width:400px;text-align:right;top:395.82px;font-size:12px;line-height:12px;font-weight:400;color:#3a3a3a;">0B</div>
<div class="t" style="left:753px;width:400px;text-align:right;top:395.82px;font-size:12px;line-height:12px;font-weight:400;color:#3a3a3a;">0B</div>
<div class="t" style="left:1183.8px;top:395.82px;font-size:12px;line-height:12px;font-weight:400;color:#3a3a3a;">AI-Workspace</div>
<div class="t" style="left:1002.8px;width:400px;text-align:right;top:395.82px;font-size:12px;line-height:12px;font-weight:400;color:#3a3a3a;">$ 0.14</div>
<div class="t" style="left:1002.8px;width:400px;text-align:right;top:410.03px;font-size:11.4px;line-height:11.4px;font-weight:400;color:#b3b3b3;">DBUs : 0.04</div>
<div class="r" style="left:252px;top:432.1px;width:5px;height:42.22px;background:#2cc41e"></div>
<div class="r" style="left:252px;top:473.82px;width:448px;height:1px;background:#dedede"></div>
<div class="r" style="left:790px;top:473.82px;width:663px;height:1px;background:#dedede"></div>
<div class="t" style="left:267.5px;top:438.84px;font-size:12px;line-height:12px;font-weight:400;color:#3a3a3a;">Success</div>
<div class="t" style="left:356.5px;top:438.84px;font-size:12px;line-height:12px;font-weight:400;color:#3a3a3a;letter-spacing:-0.15px">Spark Pi Spark3</div>
<div class="t" style="left:356.5px;top:456.74px;font-size:12px;line-height:12px;font-weight:400;color:#acacac;">644602351630391</div>
<div class="t" style="left:271.4px;width:400px;text-align:right;top:438.84px;font-size:12px;line-height:12px;font-weight:700;color:#3fb2da;">550140</div>
<div class="t" style="left:508px;width:400px;text-align:right;top:439.04px;font-size:12px;line-height:12px;font-weight:400;color:#3a3a3a;">13:33:12</div>
<div class="t" style="left:507.6px;width:400px;text-align:right;top:453.04px;font-size:12px;line-height:12px;font-weight:400;color:#acacac;">01/27/23</div>
<div class="t" style="left:604.3px;width:400px;text-align:right;top:439.04px;font-size:12px;line-height:12px;font-weight:400;color:#3a3a3a;">6m 32s</div>
<div class="t" style="left:678px;width:400px;text-align:right;top:439.04px;font-size:12px;line-height:12px;font-weight:400;color:#3a3a3a;">0B</div>
<div class="t" style="left:753px;width:400px;text-align:right;top:439.04px;font-size:12px;line-height:12px;font-weight:400;color:#3a3a3a;">0B</div>
<div class="t" style="left:1183.8px;top:439.04px;font-size:12px;line-height:12px;font-weight:400;color:#3a3a3a;">AI-Workspace</div>
<div class="t" style="left:1002.8px;width:400px;text-align:right;top:439.04px;font-size:12px;line-height:12px;font-weight:400;color:#3a3a3a;">$ 0.21</div>
<div class="t" style="left:1002.8px;width:400px;text-align:right;top:453.25px;font-size:11.4px;line-height:11.4px;font-weight:400;color:#b3b3b3;">DBUs : 0.13</div>
<div class="r" style="left:252px;top:475.32px;width:5px;height:42.22px;background:#2cc41e"></div>
<div class="r" style="left:252px;top:517.04px;width:448px;height:1px;background:#dedede"></div>
<div class="r" style="left:790px;top:517.04px;width:663px;height:1px;background:#dedede"></div>
<div class="t" style="left:267.5px;top:482.06px;font-size:12px;line-height:12px;font-weight:400;color:#3a3a3a;">Success</div>
<div class="t" style="left:356.5px;top:482.06px;font-size:12px;line-height:12px;font-weight:400;color:#3a3a3a;letter-spacing:-0.15px">Multiple Jobs Stages Sim…</div>
<div class="t" style="left:356.5px;top:499.96px;font-size:12px;line-height:12px;font-weight:400;color:#acacac;">1055207090212496</div>
<div class="t" style="left:271.4px;width:400px;text-align:right;top:482.06px;font-size:12px;line-height:12px;font-weight:700;color:#3fb2da;">920425</div>
<div class="t" style="left:508px;width:400px;text-align:right;top:482.26px;font-size:12px;line-height:12px;font-weight:400;color:#3a3a3a;">12:35:10</div>
<div class="t" style="left:507.6px;width:400px;text-align:right;top:496.26px;font-size:12px;line-height:12px;font-weight:400;color:#acacac;">01/27/23</div>
<div class="t" style="left:604.3px;width:400px;text-align:right;top:482.26px;font-size:12px;line-height:12px;font-weight:400;color:#3a3a3a;">3m 29s</div>
<div class="t" style="left:678px;width:400px;text-align:right;top:482.26px;font-size:12px;line-height:12px;font-weight:400;color:#3a3a3a;">0B</div>
<div class="t" style="left:753px;width:400px;text-align:right;top:482.26px;font-size:12px;line-height:12px;font-weight:400;color:#3a3a3a;">0B</div>
<div class="t" style="left:1183.8px;top:482.26px;font-size:12px;line-height:12px;font-weight:400;color:#3a3a3a;">ML-Worksp…</div>
<div class="t" style="left:1002.8px;width:400px;text-align:right;top:482.26px;font-size:12px;line-height:12px;font-weight:400;color:#3a3a3a;">$ 0.13</div>
<div class="t" style="left:1002.8px;width:400px;text-align:right;top:496.47px;font-size:11.4px;line-height:11.4px;font-weight:400;color:#b3b3b3;">DBUs : 0.01</div>
<div class="r" style="left:252px;top:518.54px;width:5px;height:42.22px;background:#2cc41e"></div>
<div class="r" style="left:252px;top:560.26px;width:448px;height:1px;background:#dedede"></div>
<div class="r" style="left:790px;top:560.26px;width:663px;height:1px;background:#dedede"></div>
<div class="t" style="left:267.5px;top:525.28px;font-size:12px;line-height:12px;font-weight:400;color:#3a3a3a;">Success</div>
<div class="t" style="left:356.5px;top:525.28px;font-size:12px;line-height:12px;font-weight:400;color:#3a3a3a;letter-spacing:-0.15px">Multiple Jobs Stages Sim…</div>
<div class="t" style="left:356.5px;top:543.18px;font-size:12px;line-height:12px;font-weight:400;color:#acacac;">800762261803114</div>
<div class="t" style="left:271.4px;width:400px;text-align:right;top:525.28px;font-size:12px;line-height:12px;font-weight:700;color:#3fb2da;">690445</div>
<div class="t" style="left:508px;width:400px;text-align:right;top:525.48px;font-size:12px;line-height:12px;font-weight:400;color:#3a3a3a;">12:35:04</div>
<div class="t" style="left:507.6px;width:400px;text-align:right;top:539.48px;font-size:12px;line-height:12px;font-weight:400;color:#acacac;">01/27/23</div>
<div class="t" style="left:604.3px;width:400px;text-align:right;top:525.48px;font-size:12px;line-height:12px;font-weight:400;color:#3a3a3a;">3m 22s</div>
<div class="t" style="left:678px;width:400px;text-align:right;top:525.48px;font-size:12px;line-height:12px;font-weight:400;color:#3a3a3a;">0B</div>
<div class="t" style="left:753px;width:400px;text-align:right;top:525.48px;font-size:12px;line-height:12px;font-weight:400;color:#3a3a3a;">0B</div>
<div class="t" style="left:1183.8px;top:525.48px;font-size:12px;line-height:12px;font-weight:400;color:#3a3a3a;">Fraud-Detec…</div>
<div class="t" style="left:1002.8px;width:400px;text-align:right;top:525.48px;font-size:12px;line-height:12px;font-weight:400;color:#3a3a3a;">$ 0.13</div>
<div class="t" style="left:1002.8px;width:400px;text-align:right;top:539.69px;font-size:11.4px;line-height:11.4px;font-weight:400;color:#b3b3b3;">DBUs : 0.01</div>
<div class="r" style="left:252px;top:561.76px;width:5px;height:42.22px;background:#2cc41e"></div>
<div class="r" style="left:252px;top:603.48px;width:448px;height:1px;background:#dedede"></div>
<div class="r" style="left:790px;top:603.48px;width:663px;height:1px;background:#dedede"></div>
<div class="t" style="left:267.5px;top:568.50px;font-size:12px;line-height:12px;font-weight:400;color:#3a3a3a;">Success</div>
<div class="t" style="left:356.5px;top:568.50px;font-size:12px;line-height:12px;font-weight:400;color:#3a3a3a;letter-spacing:-0.15px">Multiple Jobs Stages Sim…</div>
<div class="t" style="left:356.5px;top:586.40px;font-size:12px;line-height:12px;font-weight:400;color:#acacac;">926267555324841</div>
<div class="t" style="left:271.4px;width:400px;text-align:right;top:568.50px;font-size:12px;line-height:12px;font-weight:700;color:#3fb2da;">920056</div>
<div class="t" style="left:508px;width:400px;text-align:right;top:568.70px;font-size:12px;line-height:12px;font-weight:400;color:#3a3a3a;">12:34:45</div>
<div class="t" style="left:507.6px;width:400px;text-align:right;top:582.70px;font-size:12px;line-height:12px;font-weight:400;color:#acacac;">01/27/23</div>
<div class="t" style="left:604.3px;width:400px;text-align:right;top:568.70px;font-size:12px;line-height:12px;font-weight:400;color:#3a3a3a;">3m 5s</div>
<div class="t" style="left:678px;width:400px;text-align:right;top:568.70px;font-size:12px;line-height:12px;font-weight:400;color:#3a3a3a;">0B</div>
<div class="t" style="left:753px;width:400px;text-align:right;top:568.70px;font-size:12px;line-height:12px;font-weight:400;color:#3a3a3a;">0B</div>
<div class="t" style="left:1183.8px;top:568.70px;font-size:12px;line-height:12px;font-weight:400;color:#3a3a3a;">ML-Worksp…</div>
<div class="t" style="left:1002.8px;width:400px;text-align:right;top:568.70px;font-size:12px;line-height:12px;font-weight:400;color:#3a3a3a;">$ 0.13</div>
<div class="t" style="left:1002.8px;width:400px;text-align:right;top:582.91px;font-size:11.4px;line-height:11.4px;font-weight:400;color:#b3b3b3;">DBUs : 0.01</div>
<div class="r" style="left:252px;top:604.98px;width:5px;height:42.22px;background:#2cc41e"></div>
<div class="r" style="left:252px;top:646.7px;width:448px;height:1px;background:#dedede"></div>
<div class="r" style="left:790px;top:646.7px;width:663px;height:1px;background:#dedede"></div>
<div class="t" style="left:267.5px;top:611.72px;font-size:12px;line-height:12px;font-weight:400;color:#3a3a3a;">Success</div>
<div class="t" style="left:356.5px;top:611.72px;font-size:12px;line-height:12px;font-weight:400;color:#3a3a3a;letter-spacing:-0.15px">Multiple Jobs Stages Sim…</div>
<div class="t" style="left:356.5px;top:629.62px;font-size:12px;line-height:12px;font-weight:400;color:#acacac;">1001582507428175</div>
<div class="t" style="left:271.4px;width:400px;text-align:right;top:611.72px;font-size:12px;line-height:12px;font-weight:700;color:#3fb2da;">689518</div>
<div class="t" style="left:508px;width:400px;text-align:right;top:611.92px;font-size:12px;line-height:12px;font-weight:400;color:#3a3a3a;">12:34:40</div>
<div class="t" style="left:507.6px;width:400px;text-align:right;top:625.92px;font-size:12px;line-height:12px;font-weight:400;color:#acacac;">01/27/23</div>
<div class="t" style="left:604.3px;width:400px;text-align:right;top:611.92px;font-size:12px;line-height:12px;font-weight:400;color:#3a3a3a;">3m 5s</div>
<div class="t" style="left:678px;width:400px;text-align:right;top:611.92px;font-size:12px;line-height:12px;font-weight:400;color:#3a3a3a;">0B</div>
<div class="t" style="left:753px;width:400px;text-align:right;top:611.92px;font-size:12px;line-height:12px;font-weight:400;color:#3a3a3a;">0B</div>
<div class="t" style="left:1183.8px;top:611.92px;font-size:12px;line-height:12px;font-weight:400;color:#3a3a3a;">Fraud-Detec…</div>
<div class="t" style="left:1002.8px;width:400px;text-align:right;top:611.92px;font-size:12px;line-height:12px;font-weight:400;color:#3a3a3a;">$ 0.13</div>
<div class="t" style="left:1002.8px;width:400px;text-align:right;top:626.13px;font-size:11.4px;line-height:11.4px;font-weight:400;color:#b3b3b3;">DBUs : 0.01</div>
<div class="r" style="left:252px;top:648.2px;width:5px;height:42.22px;background:#2cc41e"></div>
<div class="r" style="left:252px;top:689.92px;width:448px;height:1px;background:#dedede"></div>
<div class="r" style="left:790px;top:689.92px;width:663px;height:1px;background:#dedede"></div>
<div class="t" style="left:267.5px;top:654.94px;font-size:12px;line-height:12px;font-weight:400;color:#3a3a3a;">Success</div>
<div class="t" style="left:356.5px;top:654.94px;font-size:12px;line-height:12px;font-weight:400;color:#3a3a3a;letter-spacing:-0.15px">Spark Pi</div>
<div class="t" style="left:356.5px;top:672.84px;font-size:12px;line-height:12px;font-weight:400;color:#acacac;">122790546006427</div>
<div class="t" style="left:271.4px;width:400px;text-align:right;top:654.94px;font-size:12px;line-height:12px;font-weight:700;color:#3fb2da;">920025</div>
<div class="t" style="left:508px;width:400px;text-align:right;top:655.14px;font-size:12px;line-height:12px;font-weight:400;color:#3a3a3a;">12:34:20</div>
<div class="t" style="left:507.6px;width:400px;text-align:right;top:669.14px;font-size:12px;line-height:12px;font-weight:400;color:#acacac;">01/27/23</div>
<div class="t" style="left:604.3px;width:400px;text-align:right;top:655.14px;font-size:12px;line-height:12px;font-weight:400;color:#3a3a3a;">3m 34s</div>
<div class="t" style="left:678px;width:400px;text-align:right;top:655.14px;font-size:12px;line-height:12px;font-weight:400;color:#3a3a3a;">0B</div>
<div class="t" style="left:753px;width:400px;text-align:right;top:655.14px;font-size:12px;line-height:12px;font-weight:400;color:#3a3a3a;">0B</div>
<div class="t" style="left:1183.8px;top:655.14px;font-size:12px;line-height:12px;font-weight:400;color:#3a3a3a;">ML-Worksp…</div>
<div class="t" style="left:1002.8px;width:400px;text-align:right;top:655.14px;font-size:12px;line-height:12px;font-weight:400;color:#3a3a3a;">$ 0.14</div>
<div class="t" style="left:1002.8px;width:400px;text-align:right;top:669.35px;font-size:11.4px;line-height:11.4px;font-weight:400;color:#b3b3b3;">DBUs : 0.02</div>
<div class="r" style="left:252px;top:691.42px;width:5px;height:42.22px;background:#2cc41e"></div>
<div class="r" style="left:252px;top:733.14px;width:448px;height:1px;background:#dedede"></div>
<div class="r" style="left:790px;top:733.14px;width:663px;height:1px;background:#dedede"></div>
<div class="t" style="left:267.5px;top:698.16px;font-size:12px;line-height:12px;font-weight:400;color:#3a3a3a;">Success</div>
<div class="t" style="left:356.5px;top:698.16px;font-size:12px;line-height:12px;font-weight:400;color:#3a3a3a;letter-spacing:-0.15px">Spark Pi</div>
<div class="t" style="left:356.5px;top:716.06px;font-size:12px;line-height:12px;font-weight:400;color:#acacac;">934369082077389</div>
<div class="t" style="left:271.4px;width:400px;text-align:right;top:698.16px;font-size:12px;line-height:12px;font-weight:700;color:#3fb2da;">689371</div>
<div class="t" style="left:508px;width:400px;text-align:right;top:698.36px;font-size:12px;line-height:12px;font-weight:400;color:#3a3a3a;">12:34:14</div>
<div class="t" style="left:507.6px;width:400px;text-align:right;top:712.36px;font-size:12px;line-height:12px;font-weight:400;color:#acacac;">01/27/23</div>
<div class="t" style="left:604.3px;width:400px;text-align:right;top:698.36px;font-size:12px;line-height:12px;font-weight:400;color:#3a3a3a;">3m 36s</div>
<div class="t" style="left:678px;width:400px;text-align:right;top:698.36px;font-size:12px;line-height:12px;font-weight:400;color:#3a3a3a;">0B</div>
<div class="t" style="left:753px;width:400px;text-align:right;top:698.36px;font-size:12px;line-height:12px;font-weight:400;color:#3a3a3a;">0B</div>
<div class="t" style="left:1183.8px;top:698.36px;font-size:12px;line-height:12px;font-weight:400;color:#3a3a3a;">Fraud-Detec…</div>
<div class="t" style="left:1002.8px;width:400px;text-align:right;top:698.36px;font-size:12px;line-height:12px;font-weight:400;color:#3a3a3a;">$ 0.14</div>
<div class="t" style="left:1002.8px;width:400px;text-align:right;top:712.57px;font-size:11.4px;line-height:11.4px;font-weight:400;color:#b3b3b3;">DBUs : 0.02</div>
<div class="r" style="left:252px;top:734.64px;width:5px;height:42.22px;background:#2cc41e"></div>
<div class="r" style="left:252px;top:776.36px;width:448px;height:1px;background:#dedede"></div>
<div class="r" style="left:790px;top:776.36px;width:663px;height:1px;background:#dedede"></div>
<div class="t" style="left:267.5px;top:741.38px;font-size:12px;line-height:12px;font-weight:400;color:#3a3a3a;">Success</div>
<div class="t" style="left:356.5px;top:741.38px;font-size:12px;line-height:12px;font-weight:400;color:#3a3a3a;letter-spacing:-0.15px">Multiple Jobs Stages Sim…</div>
<div class="t" style="left:356.5px;top:759.28px;font-size:12px;line-height:12px;font-weight:400;color:#acacac;">792415590357542</div>
<div class="t" style="left:271.4px;width:400px;text-align:right;top:741.38px;font-size:12px;line-height:12px;font-weight:700;color:#3fb2da;">919784</div>
<div class="t" style="left:508px;width:400px;text-align:right;top:741.58px;font-size:12px;line-height:12px;font-weight:400;color:#3a3a3a;">12:33:55</div>
<div class="t" style="left:507.6px;width:400px;text-align:right;top:755.58px;font-size:12px;line-height:12px;font-weight:400;color:#acacac;">01/27/23</div>
<div class="t" style="left:604.3px;width:400px;text-align:right;top:741.58px;font-size:12px;line-height:12px;font-weight:400;color:#3a3a3a;">3m 39s</div>
<div class="t" style="left:678px;width:400px;text-align:right;top:741.58px;font-size:12px;line-height:12px;font-weight:400;color:#3a3a3a;">0B</div>
<div class="t" style="left:753px;width:400px;text-align:right;top:741.58px;font-size:12px;line-height:12px;font-weight:400;color:#3a3a3a;">0B</div>
<div class="t" style="left:1183.8px;top:741.58px;font-size:12px;line-height:12px;font-weight:400;color:#3a3a3a;">ML-Worksp…</div>
<div class="t" style="left:1002.8px;width:400px;text-align:right;top:741.58px;font-size:12px;line-height:12px;font-weight:400;color:#3a3a3a;">$ 0.14</div>
<div class="t" style="left:1002.8px;width:400px;text-align:right;top:755.79px;font-size:11.4px;line-height:11.4px;font-weight:400;color:#b3b3b3;">DBUs : 0.02</div>
<div class="r" style="left:252px;top:777.86px;width:5px;height:42.22px;background:#2cc41e"></div>
<div class="t" style="left:267.5px;top:784.60px;font-size:12px;line-height:12px;font-weight:400;color:#3a3a3a;">Success</div>
<div class="t" style="left:356.5px;top:784.60px;font-size:12px;line-height:12px;font-weight:400;color:#3a3a3a;letter-spacing:-0.15px">Multiple Jobs Stages Sim…</div>
<div class="t" style="left:356.5px;top:802.50px;font-size:12px;line-height:12px;font-weight:400;color:#acacac;">500618378944794</div>
<div class="t" style="left:271.4px;width:400px;text-align:right;top:784.60px;font-size:12px;line-height:12px;font-weight:700;color:#3fb2da;">688669</div>
<div class="t" style="left:508px;width:400px;text-align:right;top:784.80px;font-size:12px;line-height:12px;font-weight:400;color:#3a3a3a;">12:33:49</div>
<div class="t" style="left:507.6px;width:400px;text-align:right;top:798.80px;font-size:12px;line-height:12px;font-weight:400;color:#acacac;">01/27/23</div>
<div class="t" style="left:604.3px;width:400px;text-align:right;top:784.80px;font-size:12px;line-height:12px;font-weight:400;color:#3a3a3a;">3m 35s</div>
<div class="t" style="left:678px;width:400px;text-align:right;top:784.80px;font-size:12px;line-height:12px;font-weight:400;color:#3a3a3a;">0B</div>
<div class="t" style="left:753px;width:400px;text-align:right;top:784.80px;font-size:12px;line-height:12px;font-weight:400;color:#3a3a3a;">0B</div>
<div class="t" style="left:1183.8px;top:784.80px;font-size:12px;line-height:12px;font-weight:400;color:#3a3a3a;">Fraud-Detec…</div>
<div class="t" style="left:1002.8px;width:400px;text-align:right;top:784.80px;font-size:12px;line-height:12px;font-weight:400;color:#3a3a3a;">$ 0.14</div>
<div class="t" style="left:1002.8px;width:400px;text-align:right;top:799.01px;font-size:11.4px;line-height:11.4px;font-weight:400;color:#b3b3b3;">DBUs : 0.02</div>
<div class="r" style="left:700px;top:215.5px;width:90px;height:587.5px;overflow:hidden;background:linear-gradient(90deg,#f6f6f6,#f7f7f7 60%,#f9f9f9)"><div style="position:absolute;left:8px;top:4.00px;width:56px;height:18px;background:#e9e9e9;border-radius:50%;filter:blur(7px);opacity:0.6"></div><div style="position:absolute;left:8px;top:47.22px;width:56px;height:18px;background:#e9e9e9;border-radius:50%;filter:blur(7px);opacity:0.6"></div><div style="position:absolute;left:8px;top:90.44px;width:56px;height:18px;background:#e9e9e9;border-radius:50%;filter:blur(7px);opacity:0.6"></div><div style="position:absolute;left:8px;top:133.66px;width:56px;height:18px;background:#e9e9e9;border-radius:50%;filter:blur(7px);opacity:0.6"></div><div style="position:absolute;left:8px;top:176.88px;width:56px;height:18px;background:#e9e9e9;border-radius:50%;filter:blur(7px);opacity:0.6"></div><div style="position:absolute;left:8px;top:220.10px;width:56px;height:18px;background:#e9e9e9;border-radius:50%;filter:blur(7px);opacity:0.6"></div><div style="position:absolute;left:8px;top:263.32px;width:56px;height:18px;background:#e9e9e9;border-radius:50%;filter:blur(7px);opacity:0.6"></div><div style="position:absolute;left:8px;top:306.54px;width:56px;height:18px;background:#e9e9e9;border-radius:50%;filter:blur(7px);opacity:0.6"></div><div style="position:absolute;left:8px;top:349.76px;width:56px;height:18px;background:#e9e9e9;border-radius:50%;filter:blur(7px);opacity:0.6"></div><div style="position:absolute;left:8px;top:392.98px;width:56px;height:18px;background:#e9e9e9;border-radius:50%;filter:blur(7px);opacity:0.6"></div><div style="position:absolute;left:8px;top:436.20px;width:56px;height:18px;background:#e9e9e9;border-radius:50%;filter:blur(7px);opacity:0.6"></div><div style="position:absolute;left:8px;top:479.42px;width:56px;height:18px;background:#e9e9e9;border-radius:50%;filter:blur(7px);opacity:0.6"></div><div style="position:absolute;left:8px;top:522.64px;width:56px;height:18px;background:#e9e9e9;border-radius:50%;filter:blur(7px);opacity:0.6"></div><div style="position:absolute;left:8px;top:565.86px;width:56px;height:18px;background:#e9e9e9;border-radius:50%;filter:blur(7px);opacity:0.6"></div></div>
<div class="r" style="left:252px;top:815px;width:1208px;height:1px;background:#dde1e6"></div>
</div>
</body></html>
